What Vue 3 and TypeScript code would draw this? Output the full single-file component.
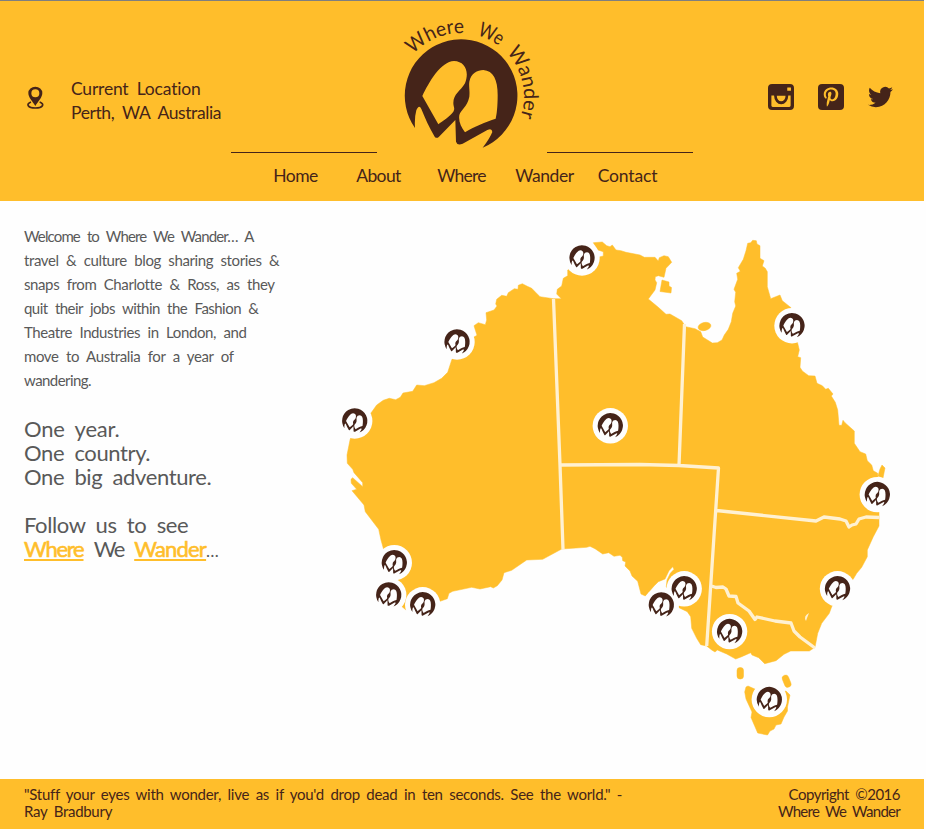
<script setup lang="ts">
interface Line { text: string; track: number }
interface Marker { x: number; y: number }

const nav: Line[] = [
  { text: 'Home', track: -0.5 },
  { text: 'About', track: -0.6 },
  { text: 'Where', track: -0.8 },
  { text: 'Wander', track: -0.4 },
  { text: 'Contact', track: -0.15 },
]
const intro: Line[] = [
  { text: 'Welcome to Where We Wander… A', track: -0.86 },
  { text: 'travel & culture blog sharing stories &', track: -0.4 },
  { text: 'snaps from Charlotte & Ross, as they', track: -0.4 },
  { text: 'quit their jobs within the Fashion &', track: -0.53 },
  { text: 'Theatre Industries in London, and', track: -0.4 },
  { text: 'move to Australia for a year of', track: -0.38 },
  { text: 'wandering.', track: -0.56 },
]
const slogans: Line[] = [
  { text: 'One year.', track: -0.2 },
  { text: 'One country.', track: -0.38 },
  { text: 'One big adventure.', track: -0.38 },
]
const markers: Marker[] = [
  { x: 582, y: 258 }, { x: 457, y: 342 }, { x: 354.7, y: 421 }, { x: 792, y: 325.7 },
  { x: 610.3, y: 425.8 }, { x: 877.3, y: 494.6 }, { x: 394.3, y: 562.7 }, { x: 388.7, y: 595 },
  { x: 422.7, y: 604.8 }, { x: 661.3, y: 605 }, { x: 684.2, y: 588.8 }, { x: 837.5, y: 588.8 },
  { x: 729.6, y: 631.6 }, { x: 769.3, y: 699.6 },
]
const tracking = (l: Line) => ({ letterSpacing: `${l.track}px` })
</script>

<template>
  <div class="page">
    <svg class="defs" width="0" height="0" aria-hidden="true">
      <defs>
        <path id="feet" fill-rule="evenodd" d="M75 384A169 169 0 1 1 278 443Q299 416 307 396Q306 383 292 390L218 431Q202 438 198 425L196 360L147 410Q140 417 134 410C118 384 104 352 94 327Q87 311 79 331Q73 352 75 384ZM97 288C117 246 153 184 192 183C225 184 239 214 225 250C211 274 190 282 190 309C190 321 196 325 190 335C180 350 157 363 145 373ZM238 245C243 220 262 210 280 210C310 212 323 240 323 285C323 320 320 345 317 356C287 366 252 380 225 397C213 380 205 365 208 345C212 330 232 320 238 290C240 270 236 260 238 245Z" />
      </defs>
    </svg>

    <header class="header">
      <div class="location">
        <svg class="pin" width="17" height="23" viewBox="80 79 51 69">
          <path class="ring" d="M92 127C76 133 82 145 105 145S134 133 118 127" />
          <path fill-rule="evenodd" d="M105 139C97 125 84 114 84 100A21 19 0 0 1 126 100C126 114 113 125 105 139ZM105 89A12 12 0 1 0 105 113A12 12 0 1 0 105 89Z" />
        </svg>
        <p><span class="place-title">Current Location</span><br><span class="place-name">Perth, WA Australia</span></p>
      </div>

      <div class="centre">
        <div class="brand">
          <i class="rule"></i>
          <svg width="170" height="152" viewBox="-39 3 510 456">
            <path id="arc" fill="none" d="M69 164A190 190 0 1 1 347.400 422.400" />
            <use href="#feet" />
            <text class="arc-text">
              <textPath href="#arc" startOffset="0" textLength="172" lengthAdjust="spacingAndGlyphs">Where</textPath>
            </text>
            <text class="arc-text">
              <textPath href="#arc" startOffset="211" textLength="74" lengthAdjust="spacingAndGlyphs">We</textPath>
            </text>
            <text class="arc-text">
              <textPath href="#arc" startOffset="314" textLength="209" lengthAdjust="spacingAndGlyphs">Wander</textPath>
            </text>
          </svg>
          <i class="rule"></i>
        </div>
        <nav><a v-for="n in nav" :key="n.text" :style="tracking(n)">{{ n.text }}</a></nav>
      </div>

      <div class="social">
        <svg width="26" height="26" viewBox="54 42 77 77">
          <path fill-rule="evenodd" d="M66 42H119Q131 42 131 54V107Q131 119 119 119H66Q54 119 54 107V54Q54 42 66 42ZM111 53V61Q111 62 112 62H121Q122 62 122 61V53Q122 52 121 52H112Q111 52 111 53ZM64 76V106Q64 110 68 110H117Q121 110 121 106V76H114A21 26 0 0 1 72 76ZM80 77A13 16 0 0 0 106 77Z" />
        </svg>
        <svg width="26" height="26" viewBox="0 0 77 77">
          <rect width="77" height="77" rx="12" />
          <path class="cut" transform="translate(17 10) scale(.112)" d="M204 6.500C101.400 6.500 0 74.900 0 185.600 0 256 39.600 296 63.600 296c9.900 0 15.600-27.600 15.600-35.400 0-9.300-23.700-29.100-23.700-67.800 0-80.400 61.200-137.400 140.400-137.400 68.100 0 118.500 38.700 118.500 109.800 0 53.100-21.300 152.700-90.300 152.700-24.900 0-46.200-18-46.200-43.800 0-37.800 26.400-74.400 26.400-113.400 0-66.200-93.900-54.200-93.900 25.800 0 16.800 2.100 35.400 9.600 50.700-13.800 59.400-42 147.900-42 209.100 0 18.900 2.700 37.500 4.500 56.400 3.400 3.800 1.700 3.400 6.900 1.500 50.400-69 48.600-82.500 71.400-172.800 12.300 23.400 44.100 36 69.300 36 106.200 0 153.900-103.500 153.900-196.800C384 71.300 298.200 6.500 204 6.500z" />
        </svg>
        <svg width="25" height="26" viewBox="0 -.5 24 25">
          <path d="M23.953 4.570a10 10 0 01-2.825.775 4.958 4.958 0 002.163-2.723c-.951.555-2.005.959-3.127 1.184a4.920 4.920 0 00-8.384 4.482C7.690 8.095 4.067 6.130 1.640 3.162a4.822 4.822 0 00-.666 2.475c0 1.710.870 3.213 2.188 4.096a4.904 4.904 0 01-2.228-.616v.060a4.923 4.923 0 003.946 4.827 4.996 4.996 0 01-2.212.085 4.936 4.936 0 004.604 3.417 9.867 9.867 0 01-6.102 2.105c-.390 0-.779-.023-1.170-.067a13.995 13.995 0 007.557 2.209c9.053 0 13.998-7.496 13.998-13.985 0-.210 0-.420-.015-.630A9.935 9.935 0 0024 4.590z" />
        </svg>
      </div>
    </header>

    <main class="main">
      <section class="copy">
        <p class="intro"><span v-for="l in intro" :key="l.text" class="line" :style="tracking(l)">{{ l.text }}</span></p>
        <h2><span v-for="l in slogans" :key="l.text" class="line" :style="tracking(l)">{{ l.text }}</span></h2>
        <h2 class="follow">Follow us to see<br><a class="where">Where</a> <span class="we">We</span> <a class="wander">Wander</a><span class="dots">…</span></h2>
      </section>

      <svg class="map" width="588" height="530" viewBox="336 225 588 530">
        <g class="land">
          <path d="M355 425L350 440L347 455L347.300 463.300L352.700 469.300L354 472.700L362.700 482.700V486.700L352.700 477.700L351 479.300L351.300 483.300L356.700 489.300L352 490.700L364 505L365.300 511.700L378.700 529.300L381 540L383.300 548.300L390 575L394 590L400 605L406 610L420 612L440 601.300L447.300 598.700L449 593.300L452.700 591.300L471.700 587.300L480 589L490.700 586.700L493.300 588L497.300 585.700L502 580L504 572.700L511.700 570.300L526.700 560L542.700 559.300L561.700 549L586.700 547.300L590 546.300L595 548.700L602.700 554L608.700 552.700L614 556.300L620 555.300L622.300 557.300L622.700 560.700L625.700 562L625 566L630 571L632 576L637.700 581.300L641 594L645.300 596L654.300 585.700L658.300 581.700L665 579L669 570.700L672.700 566.700L674 569.300L670.300 573.300L667 580L666.300 586.700L674 600L679 607.700L687.300 611.700L690.700 616.700L691.700 628.300L696.700 638.300L700.700 644.700L706.700 646L711.700 650L715 652L717.300 650L726.700 654L735.700 659L741.700 656.700L750.700 652.700L752 655L758.700 657.700L764.700 663.700L776 660.700L784 654.300L790.700 651H809.300L815 647.300L817.700 633.300L821.700 623.300L829.300 613.300L831.700 606.700L845 588L853.300 579L856.700 573.300L861.700 567.300L867.300 556.700V550L873.300 536.700L879 526V495L877.700 473.300L873.300 470.700L871.700 465L867.300 460.700L865.700 454L860 451.700L854.300 443.300V431L845 422.700L843 420.300L841.700 425.300H839L837.700 410L835.300 402.300L831.300 396L833 394L828.300 388.300L825.700 389.300L822.300 385.700L817 383.300L815 376L808.700 375.700L802.300 371L800 367.300L800.700 357.700L797.700 356.700L799.300 350L797.700 343.300L795 325L791 307.700L782.300 300.700L780 295L770.700 298.700L767.300 286.700V271.700L765.300 268.300L762.300 266L764 260.700L760 258.300V245.700L757 244L756.300 240.700L752.700 240.300L750.700 242.700L747.700 243.300L746 250.700L743.300 259.300L738.300 267.700L740.300 271.300L736.700 273.300L737.700 279.300L734 289.300L735.700 292.300L734.700 301.700L735.700 306L732.700 313.300L731.300 321.700L728.300 329.300L724.300 335L722 340L717.300 342.700L712.300 343L702.700 337L700.700 331.700L695 328.700L685.700 326.700L681.700 320.700L670 314L666 314.300L658.300 307.300L648.300 299L655 290L656.700 282.700L655 280L655.300 276.700L658.300 275.700L664 277.300L666 268.300L671.700 262.300L668.300 256.700L664 255.700L659.300 257.700L658.300 261L655 257.300H644.300L640 255L626 252.300L621 250.700L616 250L612.300 245L610 246.700L606.700 245.700L602.300 242L593.300 242.700L598 250L603.300 251.700V256L599 257L580 260L567.700 270V275.700L563.300 278.300L561.700 286L557.300 289.300L556.700 294L561.300 298.700H553.300L540 296.700L536 292.700L531.700 288.300L527.300 286.300L522.300 283.700L518.300 285.300L518 289.300L514.300 288.700L508.300 292.700L506.700 296.300L501.700 295.300L496.700 299.300L495.700 304L497 306L494 310L486 312.700L486.700 320L485.300 324.700L478.300 322.700L474 325.700L475.300 330L477 335.300L460 345L451.700 360L447.700 372.300L441.700 378.300L434 382.700L424.300 385.700L416.700 385L412.700 391.300L403 393L400.300 397.300L395.700 399.700L389.300 398.300L383.300 400.300L376.700 405L371 413Z" />
          <path d="M662 280L669 282V286L671.500 287.500L671 293L660 291.500Z" />
          <ellipse cx="704.500" cy="326.500" rx="6.500" ry="4" transform="rotate(-14 704.500 326.500)" />
          <path d="M880 469L882 465L885 468L883 478L878 476Z" />
          <rect x="737" y="667.500" width="6.500" height="11.500" rx="3" />
          <rect x="783.300" y="675" width="6.500" height="12.500" rx="3" transform="rotate(-22 786.500 681)" />
          <path d="M746 687L748 686L757 690L770 696L786 691L790 695L787.500 707V711L784 717L781 724L776 725L774 729L770 731L767.500 735L757.700 733L751 717.500L752 712L746 699L744.700 692Z" />
        </g>
        <path class="border" d="M553.500 299L560 465L563 549M560 465L640 464.500L679 465.500L718.500 468L706.700 646M684.500 324L679 465.500M716.500 510.500L816 521L824 517L840 519L846 521L849 527L852 525L856 524L859 519L866 517L879 517.500M711.500 586L716 587.500L723 587L726 589L729 596L736 596.500L738 603L749 611L755 619.500L757 617L775 621L791 623L794 631L800 637L815 648" />
        <path class="lake" d="M809 613Q803 616 806 621L807 618Z" />
        <circle v-for="(m, i) in markers" :key="`disc-${i}`" class="disc" :cx="m.x" :cy="m.y" r="17.700" />
        <g v-for="(m, i) in markers" :key="`foot-${i}`" :transform="`translate(${m.x} ${m.y})`">
          <use href="#feet" class="foot" transform="scale(.0746) translate(-213 -288)" />
        </g>
      </svg>
    </main>

    <footer class="footer">
      <p class="quote">"Stuff your eyes with wonder, live as if you'd drop dead in ten seconds. See the world." -<br>Ray Bradbury</p>
      <p class="right"><span class="copyright">Copyright ©2016</span><br><span class="owner">Where We Wander</span></p>
    </footer>
  </div>
</template>

<style>
body { background: #fefefe; }
</style>

<style scoped>
.page { width: 924px; height: 829px; display: flex; flex-direction: column; font-family: Lato, sans-serif; color: #595959; }
.defs { position: absolute; }
p, h2 { margin: 0; font-weight: 400; white-space: nowrap; }
.header { height: 200px; flex: none; border-top: 1px solid #7f7f7f; background: #ffbe2b; color: #452419; display: grid; grid-template-columns: 231px 462px 231px; fill: #452419; }
.location { display: flex; align-items: center; height: 48px; padding: 76px 0 0 27px; gap: 27px; font-size: 17.500px; line-height: 24px; word-spacing: 4px; }
.place-title { letter-spacing: -.2px; }
.place-name { letter-spacing: -.4px; }
.pin { flex: none; margin-bottom: 8px; }
.ring { fill: none; stroke: #452419; stroke-width: 5; }
.brand { display: flex; align-items: flex-end; height: 152px; }
.rule { flex: 1; height: 1px; background: #452419; }
.arc-text { font-size: 60px; }
nav { display: grid; grid-template-columns: repeat(5, 83px); justify-content: center; text-align: center; font-size: 17.500px; line-height: 24px; padding: 11px 1px 0 0; }
.social { display: flex; align-items: center; gap: 24px; height: 26px; padding: 83px 0 0 75px; }
.cut { fill: #ffbe2b; }
.main { flex: 1; display: flex; }
.copy { width: 288px; padding: 23px 0 0 24px; }
.intro { font-size: 15px; line-height: 24px; word-spacing: 4px; margin-bottom: 25px; }
.line { display: block; }
h2 { font-size: 22px; line-height: 24px; word-spacing: 5px; margin-bottom: 24px; }
h2 a { color: #ffbe2b; -webkit-text-stroke: .6px #ffbe2b; text-decoration: underline; text-decoration-thickness: 2px; text-underline-offset: 2px; }
.follow { letter-spacing: -.37px; }
.where { letter-spacing: -1.250px; }
.wander { letter-spacing: -.8px; }
.we { letter-spacing: -1.500px; }
.dots { letter-spacing: -1px; font-size: 17px; }
.map { margin: 24px 0 0 24px; flex: none; }
.land { fill: #ffbe2b; stroke: #ffbe2b; stroke-width: .5; stroke-linejoin: round; }
.border { fill: none; stroke: #fff1d2; stroke-width: 3.300; stroke-linejoin: round; }
.lake { fill: #fff1d2; }
.disc { fill: #fefefe; }
.foot { fill: #452419; }
.footer { height: 50px; flex: none; box-sizing: border-box; background: #ffbe2b; color: #452419; display: flex; justify-content: space-between; padding: 7px 24px 0; font-size: 15px; line-height: 17px; word-spacing: 3px; }
.quote { letter-spacing: -.28px; }
.right { text-align: right; }
.copyright { letter-spacing: -.5px; }
.owner { letter-spacing: -.73px; }
</style>
